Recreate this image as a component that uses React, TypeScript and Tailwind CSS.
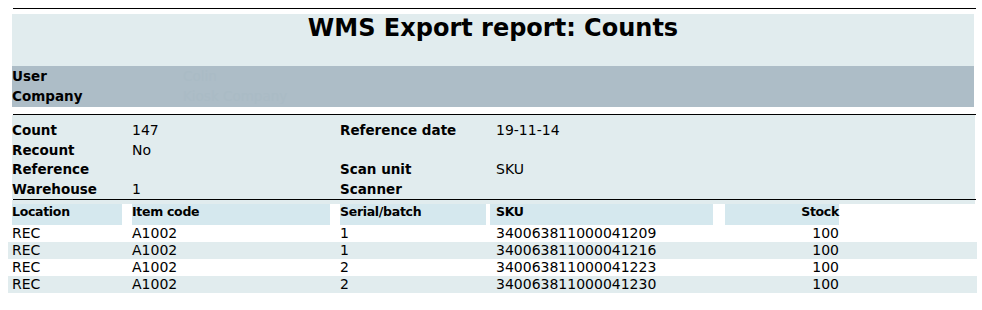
import React from 'react';

const rows = [
  { loc: 'REC', item: 'A1002', serial: '1', sku: '340063811000041209', stock: '100' },
  { loc: 'REC', item: 'A1002', serial: '1', sku: '340063811000041216', stock: '100' },
  { loc: 'REC', item: 'A1002', serial: '2', sku: '340063811000041223', stock: '100' },
  { loc: 'REC', item: 'A1002', serial: '2', sku: '340063811000041230', stock: '100' },
];

const info = [
  ['Count', '147', 'Reference date', '19-11-14'],
  ['Recount', 'No', '', ''],
  ['Reference', '', 'Scan unit', 'SKU'],
  ['Warehouse', '1', 'Scanner', ''],
];

const App: React.FC = () => {
  return (
    <div className="w-[982px] h-[310px] bg-white text-black font-['DejaVu_Sans',sans-serif] pt-2">
      <div className="ml-[13px] w-[963px] h-px bg-black" />

      <div className="mt-[5px] ml-3 w-[962px] h-[52px] bg-[#e1ecee] text-center">
        <h1 className="font-bold text-[24px] leading-[28px]">WMS Export report: Counts</h1>
      </div>

      <div className="ml-3 w-[962px] h-[41px] bg-[#adbdc7] text-[13.5px] leading-[20px]">
        <div className="flex">
          <div className="w-[171px] font-bold">User</div>
          <div className="text-[#aabbc5]">Colin</div>
        </div>
        <div className="flex">
          <div className="w-[171px] font-bold">Company</div>
          <div className="text-[#aabbc5]">Kiosk Company</div>
        </div>
      </div>

      <div className="mt-[7px] ml-[13px] w-[963px] h-px bg-black" />

      <div className="ml-3 w-[963px] h-[84px] bg-[#e1ecee] pt-[6px] text-[13.5px] leading-[19px] grid grid-cols-[120px_208px_156px_1fr]">
        {info.map((r, i) => (
          <React.Fragment key={i}>
            <div className="font-bold">{r[0]}</div>
            <div className="text-[14px]">{r[1]}</div>
            <div className="font-bold">{r[2]}</div>
            <div className="text-[14px]">{r[3]}</div>
          </React.Fragment>
        ))}
      </div>

      <div className="ml-[13px] w-[963px] h-px bg-black" />
      <div className="ml-3 w-[963px] h-1 bg-[#e1ecee]" />

      <div className="ml-3 flex h-[21px] text-[12.5px] leading-[16px] tracking-[-0.3px] font-bold">
        <div className="w-[110px] bg-[#d5e8ee]">Location</div>
        <div className="ml-[10px] w-[198px] bg-[#d5e8ee]">Item code</div>
        <div className="ml-[10px] w-[146px] bg-[#d5e8ee]">Serial/batch</div>
        <div className="ml-[4px] w-[223px] bg-[#d5e8ee] pl-[6px]">SKU</div>
        <div className="ml-[12px] w-[114px] bg-[#d5e8ee] text-right">Stock</div>
      </div>

      <div className="ml-2 w-[969px] text-[14px] leading-[17px]">
        {rows.map((r, i) => (
          <div key={i} className={i % 2 === 1 ? 'flex bg-[#e1ecee]' : 'flex bg-white'}>
            <div className="pl-1 w-[124px]">{r.loc}</div>
            <div className="w-[208px]">{r.item}</div>
            <div className="w-[156px]">{r.serial}</div>
            <div className="w-[230px]">{r.sku}</div>
            <div className="w-[113px] text-right">{r.stock}</div>
          </div>
        ))}
      </div>
    </div>
  );
};

export default App;
